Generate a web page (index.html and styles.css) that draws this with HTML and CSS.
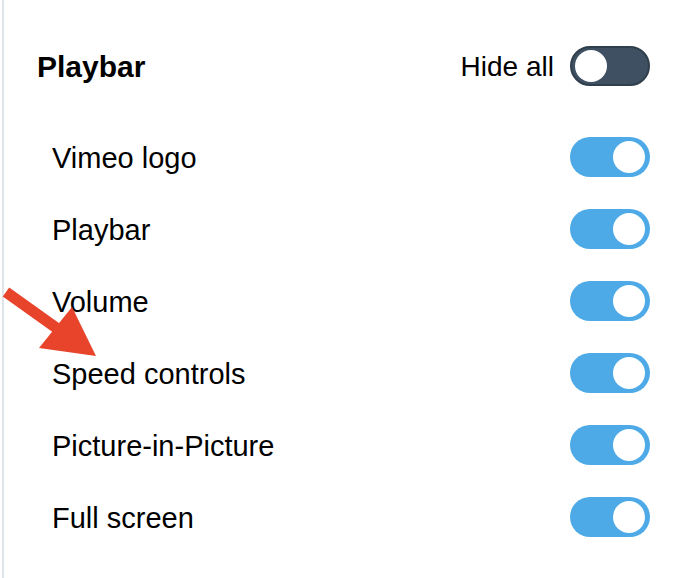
FILE: index.html
```html
<!DOCTYPE html>
<html>
<head>
<meta charset="utf-8">
<link rel="stylesheet" href="styles.css">
</head>
<body>
<div class="panel">
  <div class="header">
    <h2 class="title">Playbar</h2>
    <div class="hide-all">
      <span class="hide-label">Hide all</span>
      <span class="toggle toggle-off"><span class="knob"></span></span>
    </div>
  </div>
  <ul class="rows">
    <li class="row"><span class="label">Vimeo logo</span><span class="toggle toggle-on"><span class="knob"></span></span></li>
    <li class="row"><span class="label">Playbar</span><span class="toggle toggle-on"><span class="knob"></span></span></li>
    <li class="row"><span class="label">Volume</span><span class="toggle toggle-on"><span class="knob"></span></span></li>
    <li class="row"><span class="label">Speed controls</span><span class="toggle toggle-on"><span class="knob"></span></span></li>
    <li class="row"><span class="label">Picture-in-Picture</span><span class="toggle toggle-on"><span class="knob"></span></span></li>
    <li class="row"><span class="label">Full screen</span><span class="toggle toggle-on"><span class="knob"></span></span></li>
  </ul>
  <svg class="arrow" width="110" height="80" viewBox="0 0 110 80">
    <line x1="6" y1="12" x2="62" y2="52" stroke="#e8432b" stroke-width="11"/>
    <polygon points="72,27 96,76 39,68" fill="#e8432b"/>
  </svg>
</div>
</body>
</html>
```
FILE: styles.css
```css
html, body {
  margin: 0;
  padding: 0;
  background: #ffffff;
}
body {
  font-family: "Liberation Sans", Arial, sans-serif;
  color: #000;
}
.panel {
  position: relative;
  margin-left: 2px;
  border-left: 2px solid #dfe4ea;
  height: 578px;
  box-sizing: border-box;
  padding: 46px 26px 0 33px;
}
.header {
  display: flex;
  align-items: center;
  justify-content: space-between;
  height: 40px;
}
.title {
  margin: 0;
  padding-top: 2px;
  font-size: 30px;
  font-weight: bold;
}
.hide-all {
  display: flex;
  align-items: center;
  gap: 16px;
}
.hide-label {
  padding-top: 2px;
  font-size: 28px;
}
.rows {
  list-style: none;
  margin: 0;
  padding: 0 0 0 15px;
  margin-top: 51px;
  display: flex;
  flex-direction: column;
  gap: 32px;
}
.row {
  display: flex;
  align-items: center;
  justify-content: space-between;
  height: 40px;
}
.label {
  padding-top: 2px;
  font-size: 29px;
}
.toggle {
  position: relative;
  display: block;
  width: 80px;
  height: 40px;
  border-radius: 20px;
  box-sizing: border-box;
  flex: none;
}
.toggle-on {
  background: #4eaae6;
}
.toggle-off {
  background: #3e5062;
  border: 2px solid #303f4c;
}
.knob {
  position: absolute;
  top: 4px;
  width: 32px;
  height: 32px;
  border-radius: 50%;
  background: #fff;
}
.toggle-on .knob {
  right: 5px;
}
.toggle-off .knob {
  top: 2px;
  left: 3px;
}
.arrow {
  position: absolute;
  left: -4px;
  top: 280px;
}
```
